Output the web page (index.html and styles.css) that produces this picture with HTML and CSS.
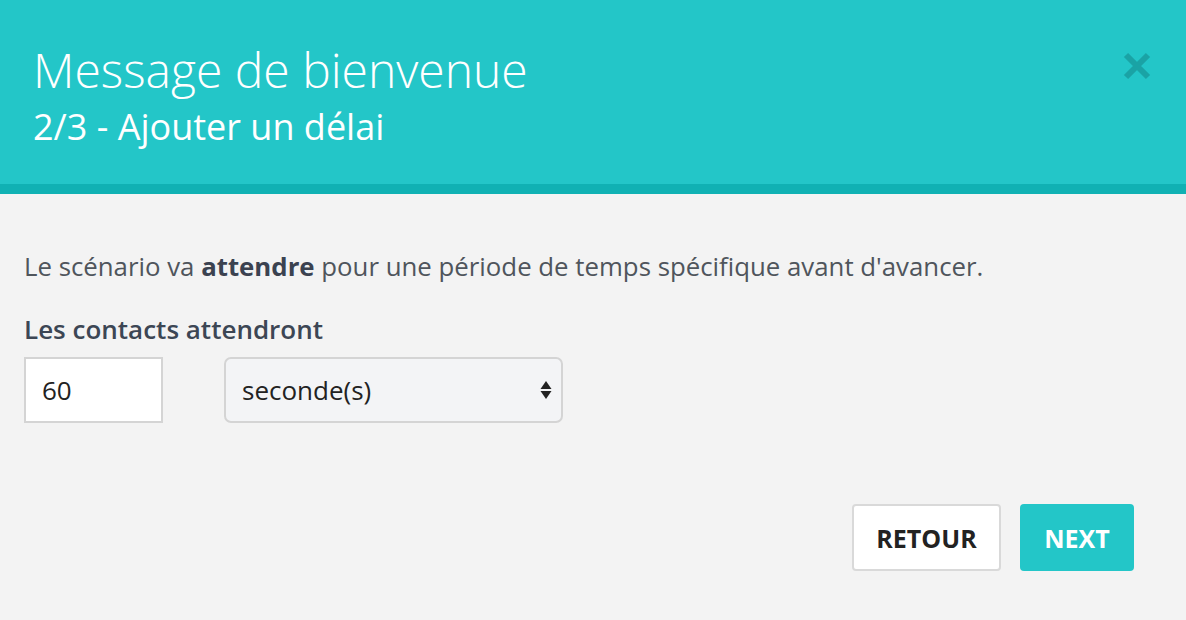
FILE: index.html
```html
<!DOCTYPE html>
<html lang="fr">
<head>
    <meta charset="UTF-8">
    <meta name="viewport" content="width=device-width, initial-scale=1.0">
    <title>Message de bienvenue</title>
    <link rel="stylesheet" href="styles.css">
</head>
<body>
    <div class="modal">
        <div class="modal-header">
            <div class="titres">
                <h1>Message de bienvenue</h1>
                <h2>2/3 - Ajouter un délai</h2>
            </div>
            <button type="button" class="fermer" aria-label="Fermer">
                <svg width="30" height="30" viewBox="0 0 30 30">
                    <path d="M4 4 L26 26 M26 4 L4 26" stroke="#1aa3a5" stroke-width="6"/>
                </svg>
            </button>
        </div>
        <div class="modal-body">
            <p class="explication">Le scénario va <strong>attendre</strong> pour une période de temps spécifique avant d'avancer.</p>
            <label class="champ-titre">Les contacts attendront</label>
            <div class="champs">
                <input type="text" class="duree" value="60">
                <div class="select-unite">
                    <span>seconde(s)</span>
                    <svg width="12" height="22" viewBox="0 0 12 22">
                        <path d="M6 2 L11.5 10 L0.5 10 Z M0.5 12 L11.5 12 L6 20 Z" fill="#222"/>
                    </svg>
                </div>
            </div>
        </div>
        <div class="modal-footer">
            <button type="button" class="btn btn-retour">RETOUR</button>
            <button type="button" class="btn btn-next">NEXT</button>
        </div>
    </div>
</body>
</html>
```

FILE: styles.css
```css
body, html {
    margin: 0;
    height: 100%;
    background-color: #f3f3f3;
    font-family: "Open Sans", "Liberation Sans", sans-serif;
}

.modal {
    display: flex;
    flex-direction: column;
    height: 100%;
}

.modal-header {
    background-color: #23c6c8;
    border-bottom: 10px solid #10b1b3;
    height: 184px;
    box-sizing: content-box;
    display: flex;
    justify-content: space-between;
    align-items: flex-start;
    padding: 0 34px 0 33px;
}

.modal-header h1 {
    margin: 38px 0 0 0;
    font-weight: 300;
    font-size: 48px;
    line-height: 64px;
    color: #fff;
}

.modal-header h2 {
    margin: 0;
    font-weight: 400;
    font-size: 36px;
    line-height: 50px;
    color: #fff;
}

.fermer {
    margin-top: 51px;
    background: none;
    border: 0;
    padding: 0;
    cursor: pointer;
}

.modal-body {
    padding: 54px 24px 0 24px;
}

.explication {
    margin: 0;
    font-size: 25.8px;
    line-height: 36px;
    color: #4f555c;
}

.explication strong {
    font-weight: 700;
    color: #3b4250;
}

.champ-titre {
    display: block;
    margin-top: 27px;
    font-size: 26px;
    font-weight: 600;
    color: #3c4654;
    line-height: 36px;
}

.champs {
    display: flex;
    gap: 61px;
    margin-top: 10px;
}

.duree {
    width: 139px;
    height: 66px;
    box-sizing: border-box;
    border: 2px solid #d4d4d4;
    background-color: #fff;
    padding: 0 16px;
    margin: 0;
    font-family: inherit;
    font-size: 26px;
    color: #222;
    outline: none;
}

.select-unite {
    width: 339px;
    height: 66px;
    box-sizing: border-box;
    border: 2px solid #d4d4d4;
    border-radius: 7px;
    background-color: #f3f4f6;
    display: flex;
    align-items: center;
    justify-content: space-between;
    padding: 0 9px 0 16px;
    font-size: 26px;
    color: #222;
}

.modal-footer {
    display: flex;
    justify-content: flex-end;
    gap: 19px;
    padding: 81px 52px 0 0;
}

.btn {
    height: 67px;
    border-radius: 4px;
    font-family: inherit;
    font-weight: 700;
    font-size: 25px;
    cursor: pointer;
}

.btn-retour {
    width: 149px;
    background-color: #fff;
    border: 2px solid #d9d9d9;
    color: #222;
}

.btn-next {
    width: 114px;
    background-color: #23c6c8;
    border: 0;
    color: #fff;
}
```
